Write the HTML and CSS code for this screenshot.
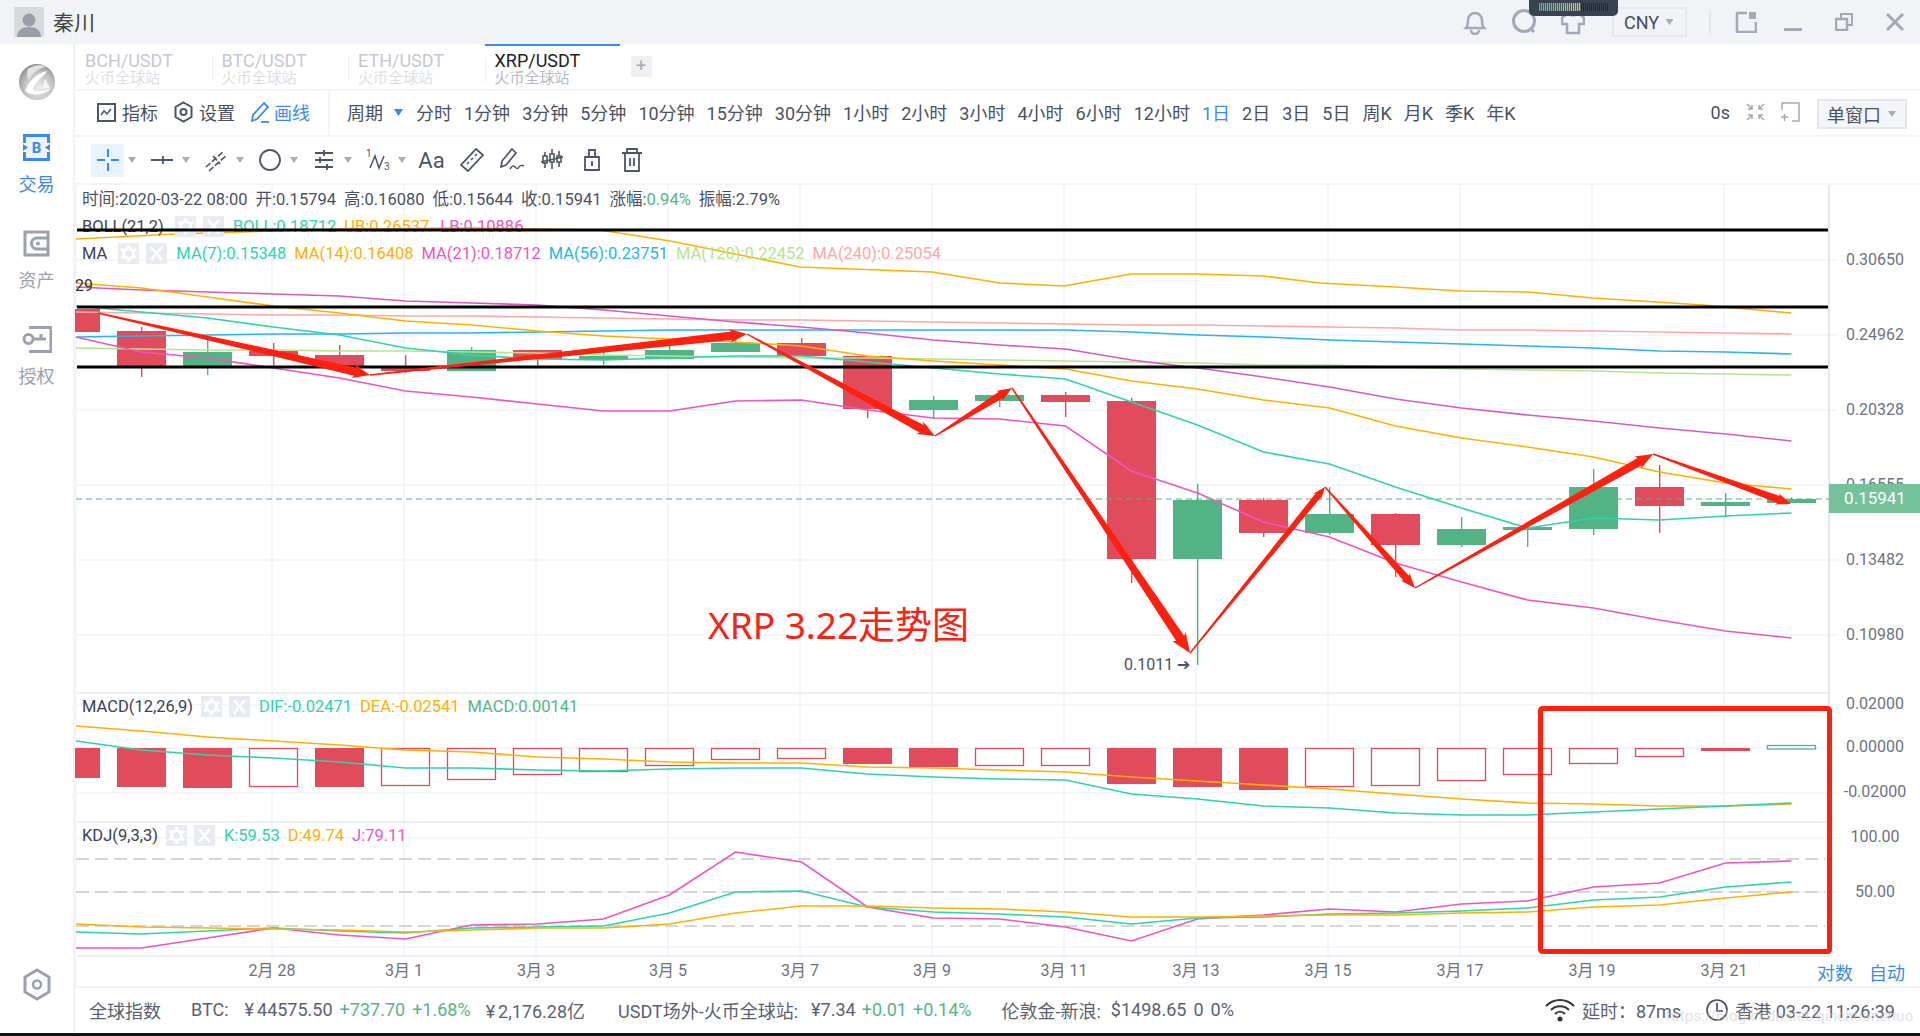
FILE: index.html
```html
<!DOCTYPE html>
<html lang="zh-CN">
<head>
  <meta charset="UTF-8">
  <title>XRP/USDT</title>
  <link rel="stylesheet" href="styles.css">
</head>
<body>
  <!-- shared icons -->
  <svg class="defs">
    <symbol id="i-gear" viewBox="0 0 21 21">
      <rect width="21" height="21" fill="#e8ebef"/>
      <circle cx="10.5" cy="10.5" r="5" fill="none" stroke="#fff" stroke-width="3"/>
      <path d="M10.5 2v4M10.5 15v4M3 6l3.500 2M15 13l3.500 2M3 15l3.500-2M15 8l3.500-2" stroke="#fff" stroke-width="2.500"/>
    </symbol>
    <symbol id="i-close" viewBox="0 0 21 21">
      <rect width="21" height="21" fill="#e8ebef"/>
      <path d="M5 4l11 13M16 4L5 17" stroke="#fff" stroke-width="2.500"/>
    </symbol>
    <symbol id="i-caret" viewBox="0 0 8 6">
      <path d="M0 0h8L4 6z" fill="#a8aeb8"/>
    </symbol>
  </svg>

  <header class="titlebar">
    <div class="avatar">
      <svg width="30" height="30" viewBox="0 0 30 30"><circle cx="15" cy="13" r="6.500" fill="#9a9ea6"/><path d="M3 30c0-7 5-10 12-10s12 3 12 10z" fill="#9a9ea6"/></svg>
    </div>
    <span class="username">秦川</span>
    <div class="title-right">
      <svg class="ticon" width="24" height="26" viewBox="0 0 24 26"><path d="M3 19c2-2 2-4 2-8a7 7 0 0 1 14 0c0 4 0 6 2 8z" fill="none" stroke="#a3a9b5" stroke-width="2.500"/><path d="M8 21a4 4 0 0 0 8 0" fill="none" stroke="#a3a9b5" stroke-width="2.500"/></svg>
      <svg class="ticon" width="24" height="26" viewBox="0 0 24 26"><circle cx="12" cy="12" r="10.500" fill="none" stroke="#a3a9b5" stroke-width="3"/><path d="M18 19l4 4" stroke="#a3a9b5" stroke-width="3"/></svg>
      <svg class="ticon" width="24" height="26" viewBox="0 0 24 26"><path d="M7 4L1 9v6h5v9h12v-9h5V9l-6-5c-1 3-9 3-10 0z" fill="none" stroke="#a3a9b5" stroke-width="2.500"/></svg>
      <div class="currency">CNY<svg width="11" height="6"><use href="#i-caret"/></svg></div>
      <span class="title-sep"></span>
      <div class="win-btns">
        <svg class="win-first" width="22" height="22" viewBox="0 0 22 22"><path d="M12 2H2v19h19V11" fill="none" stroke="#a3a9b5" stroke-width="2.500"/><rect x="14" y="1" width="7" height="7" fill="#a3a9b5"/></svg>
        <svg width="18" height="22" viewBox="0 0 18 22"><path d="M0 18.500h18" stroke="#a3a9b5" stroke-width="3"/></svg>
        <svg width="18" height="18" viewBox="0 0 18 18"><path d="M6 5V1h11v11h-5" fill="none" stroke="#a3a9b5" stroke-width="2"/><rect x="1" y="6" width="11" height="11" fill="none" stroke="#a3a9b5" stroke-width="2.500"/></svg>
        <svg width="18" height="18" viewBox="0 0 18 18"><path d="M1 1l16 16M17 1L1 17" stroke="#a3a9b5" stroke-width="3"/></svg>
      </div>
    </div>
    <!-- network meter floating over the title bar -->
    <div class="net-meter"><span class="meter-on"></span><span class="meter-off"></span></div>
  </header>

  <div class="layout">
    <nav class="sidebar">
      <svg class="logo" width="36" height="36" viewBox="0 0 36 36">
        <defs><radialGradient id="silver" cx="55%" cy="65%" r="65%"><stop offset="0" stop-color="#ececec"/><stop offset="0.6" stop-color="#c4c4c4"/><stop offset="1" stop-color="#8f8f8f"/></radialGradient></defs>
        <circle cx="18" cy="18" r="18" fill="url(#silver)"/>
        <path d="M9 5c6-4 13-5 18-2-7 1-14 6-17 13-2-3-3-7-1-11z" fill="#e2e2e2"/>
        <path d="M6 27c3-9 12-18 22-20-1 3-6 6-9 10-3 3-5 6-5 9 5 2 11 1 18-2-6 7-19 9-26 3z" fill="#fff"/>
        <path d="M26 15l5 9-9 1c2-3 3-6 4-10z" fill="#f5f5f5"/>
      </svg>
      <a class="nav-item active">
        <svg width="27" height="27" viewBox="0 0 27 27">
          <rect x="3" y="3" width="21" height="21" fill="#eef5fe"/>
          <path d="M1.500 9V1.500h24V9M25.500 18v7.500h-24V18" fill="none" stroke="#3a8bf0" stroke-width="3"/>
          <path d="M0 10l5 3.500-5 3.500zM27 10l-5 3.500 5 3.500z" fill="#3a8bf0"/>
          <text x="13.500" y="19" class="nav-b">B</text>
        </svg>
        <span>交易</span>
      </a>
      <a class="nav-item">
        <svg width="27" height="27" viewBox="0 0 27 27">
          <path d="M25 7V2H2v23h23v-5" fill="none" stroke="#9ba2ae" stroke-width="3"/>
          <path d="M25 8H14a5.500 5.500 0 0 0 0 11h11z" fill="none" stroke="#9ba2ae" stroke-width="3"/>
          <circle cx="15" cy="13.500" r="2" fill="#9ba2ae"/>
        </svg>
        <span>资产</span>
      </a>
      <a class="nav-item">
        <svg width="30" height="27" viewBox="0 0 30 27">
          <path d="M7 1.500h22v24H7" fill="none" stroke="#9ba2ae" stroke-width="3"/>
          <rect x="0" y="5" width="6" height="14" fill="#fff"/>
          <circle cx="6.500" cy="13" r="4.500" fill="#fff" stroke="#9ba2ae" stroke-width="3"/>
          <path d="M11 13h13M19 13v-5" stroke="#9ba2ae" stroke-width="3"/>
        </svg>
        <span>授权</span>
      </a>
      <svg class="nav-bottom" width="28" height="33" viewBox="0 0 28 33">
        <path d="M14 2l12 7v15l-12 7-12-7V9z" fill="none" stroke="#9ba2ae" stroke-width="3"/>
        <circle cx="14" cy="16.500" r="4" fill="none" stroke="#9ba2ae" stroke-width="2.500"/>
      </svg>
    </nav>

    <main class="content">
      <div class="tabs">
        <div class="tab"><b>BCH/USDT</b><small>火币全球站</small></div>
        <div class="tab"><b>BTC/USDT</b><small>火币全球站</small></div>
        <div class="tab"><b>ETH/USDT</b><small>火币全球站</small></div>
        <div class="tab active"><b>XRP/USDT</b><small>火币全球站</small></div>
        <div class="tab-add">+</div>
      </div>

      <div class="toolbar">
        <div class="tool-left">
          <div class="tb-item">
            <svg width="19" height="19" viewBox="0 0 19 19"><rect x="1" y="1" width="17" height="17" fill="none" stroke="#4d5666" stroke-width="2"/><path d="M4 12l3-4 3 3 4-5" fill="none" stroke="#4d5666" stroke-width="1.500"/></svg>
            <span>指标</span>
          </div>
          <div class="tb-item">
            <svg width="19" height="22" viewBox="0 0 19 22"><path d="M9.500 1.500l8 4.500v10l-8 4.500-8-4.500V6z" fill="none" stroke="#4d5666" stroke-width="2"/><circle cx="9.500" cy="11" r="3" fill="none" stroke="#4d5666" stroke-width="2"/></svg>
            <span>设置</span>
          </div>
          <div class="tb-item blue">
            <svg width="19" height="22" viewBox="0 0 19 22"><path d="M13 2l4 4L6 18l-5 2 1-6z" fill="none" stroke="#3a8bf0" stroke-width="1.800"/><path d="M10 21h8" stroke="#3a8bf0" stroke-width="1.800"/></svg>
            <span>画线</span>
          </div>
        </div>
        <div class="periods">
          <div class="period-label">周期<svg width="11" height="7" viewBox="0 0 8 6"><path d="M0 0h8L4 6z" fill="#3a8bf0"/></svg></div>
          <span>分时</span><span>1分钟</span><span>3分钟</span><span>5分钟</span><span>10分钟</span><span>15分钟</span><span>30分钟</span>
          <span>1小时</span><span>2小时</span><span>3小时</span><span>4小时</span><span>6小时</span><span>12小时</span>
          <span class="blue">1日</span><span>2日</span><span>3日</span><span>5日</span><span>周K</span><span>月K</span><span>季K</span><span>年K</span>
        </div>
        <div class="tool-right">
          <span>0s</span>
          <svg width="19" height="20" viewBox="0 0 19 20"><path d="M1 2l5 5M6 3v4H2M18 2l-5 5M13 3v4h4M1 18l5-5M6 17v-4H2M18 18l-5-5M13 17v-4h4" fill="none" stroke="#a3a9b5" stroke-width="1.500"/></svg>
          <svg width="19" height="20" viewBox="0 0 19 20"><path d="M1 8V1h17v18h-7" fill="none" stroke="#a3a9b5" stroke-width="1.500"/><path d="M0 15h7M3.500 12v7" stroke="#a3a9b5" stroke-width="1.500"/></svg>
          <div class="window-select">单窗口<svg width="10" height="6"><use href="#i-caret"/></svg></div>
        </div>
      </div>

      <div class="drawbar">
        <div class="draw-tool">
          <span class="draw-icon selected"><svg width="24" height="24" viewBox="0 0 24 24"><path d="M12 1v8M12 15v8M1 12h8M15 12h8" stroke="#3a8bf0" stroke-width="2"/></svg></span>
          <svg class="caret" width="8" height="6"><use href="#i-caret"/></svg>
        </div>
        <div class="draw-tool">
          <span class="draw-icon"><svg width="24" height="24" viewBox="0 0 24 24"><path d="M1 12h22M13 8v8" stroke="#4d5666" stroke-width="1.800"/></svg></span>
          <svg class="caret" width="8" height="6"><use href="#i-caret"/></svg>
        </div>
        <div class="draw-tool">
          <span class="draw-icon"><svg width="24" height="24" viewBox="0 0 24 24"><path d="M2 19L20 3M5 23L23 7M9 8l7 8" fill="none" stroke="#4d5666" stroke-width="1.600" stroke-dasharray="6 2"/></svg></span>
          <svg class="caret" width="8" height="6"><use href="#i-caret"/></svg>
        </div>
        <div class="draw-tool">
          <span class="draw-icon"><svg width="24" height="24" viewBox="0 0 24 24"><circle cx="12" cy="12" r="10" fill="none" stroke="#4d5666" stroke-width="1.800"/></svg></span>
          <svg class="caret" width="8" height="6"><use href="#i-caret"/></svg>
        </div>
        <div class="draw-tool">
          <span class="draw-icon"><svg width="24" height="24" viewBox="0 0 24 24"><path d="M3 5h18M3 12h18M3 19h18M12 2v6M8 9v6M15 16v6" stroke="#4d5666" stroke-width="1.800"/></svg></span>
          <svg class="caret" width="8" height="6"><use href="#i-caret"/></svg>
        </div>
        <div class="draw-tool">
          <span class="draw-icon"><svg width="26" height="24" viewBox="0 0 26 24"><path d="M5 20L10 8l4 12 5-12" fill="none" stroke="#4d5666" stroke-width="1.500"/><text x="1" y="9" class="wave-num">1</text><text x="19" y="22" class="wave-num">3</text></svg></span>
          <svg class="caret" width="8" height="6"><use href="#i-caret"/></svg>
        </div>
        <span class="draw-icon text-tool">Aa</span>
        <span class="draw-icon"><svg width="24" height="24" viewBox="0 0 24 24"><path d="M16 1l7 6L8 23l-7-6z" fill="none" stroke="#4d5666" stroke-width="1.800"/><path d="M7 16l2-2M11 12l2-2M15 8l2-2" stroke="#4d5666" stroke-width="1.600"/></svg></span>
        <span class="draw-icon"><svg width="26" height="24" viewBox="0 0 26 24"><path d="M13 1l4 4L7 17l-5 2 1-6z" fill="none" stroke="#4d5666" stroke-width="1.700"/><path d="M11 21c2-3 3-4 5-2s3 2 4 0 3-2 5-1" fill="none" stroke="#4d5666" stroke-width="1.500"/></svg></span>
        <span class="draw-icon"><svg width="24" height="24" viewBox="0 0 24 24"><path d="M5 4v16M12 1v20M19 3v16" stroke="#4d5666" stroke-width="1.600"/><path d="M3 8h4v7H3zM10 6h4v8h-4zM17 8h4v6h-4z" fill="#fff" stroke="#4d5666" stroke-width="1.600"/><path d="M1 14l22-5" stroke="#4d5666" stroke-width="1.600"/></svg></span>
        <span class="draw-icon"><svg width="18" height="24" viewBox="0 0 18 24"><path d="M2 9h14v13H2zM6 9V2h6v7" fill="none" stroke="#4d5666" stroke-width="1.800"/><path d="M9 13v5" stroke="#4d5666" stroke-width="1.800"/></svg></span>
        <span class="draw-icon"><svg width="20" height="24" viewBox="0 0 20 24"><path d="M0 5h20M5 5V1h10v4M3 5v18h14V5M8 10v8M12 10v8" fill="none" stroke="#4d5666" stroke-width="1.800"/></svg></span>
      </div>

      <section class="chart">
        <svg id="chart" width="1845" height="803" viewBox="75 185 1845 803"></svg>

        <div class="legend row-info">
          <span>时间:2020-03-22 08:00</span><span>开:0.15794</span><span>高:0.16080</span><span>低:0.15644</span><span>收:0.15941</span>
          <span>涨幅:<em class="c-green">0.94%</em></span><span>振幅:2.79%</span>
        </div>
        <div class="legend row-boll">
          <span class="name">BOLL(21,2)</span>
          <svg class="mini"><use href="#i-gear"/></svg><svg class="mini"><use href="#i-close"/></svg>
          <span class="c-teal">BOLL:0.18712</span><span class="c-orange">UB:0.26537</span><span class="c-magenta">LB:0.10886</span>
        </div>
        <div class="legend row-ma">
          <span class="name">MA</span>
          <svg class="mini"><use href="#i-gear"/></svg><svg class="mini"><use href="#i-close"/></svg>
          <span class="c-teal">MA(7):0.15348</span><span class="c-orange">MA(14):0.16408</span><span class="c-magenta">MA(21):0.18712</span>
          <span class="c-blue">MA(56):0.23751</span><span class="c-lime">MA(120):0.22452</span><span class="c-pink">MA(240):0.25054</span>
        </div>
        <div class="legend row-macd">
          <span class="name">MACD(12,26,9)</span>
          <svg class="mini"><use href="#i-gear"/></svg><svg class="mini"><use href="#i-close"/></svg>
          <span class="c-teal">DIF:-0.02471</span><span class="c-orange">DEA:-0.02541</span><span class="c-green">MACD:0.00141</span>
        </div>
        <div class="legend row-kdj">
          <span class="name">KDJ(9,3,3)</span>
          <svg class="mini"><use href="#i-gear"/></svg><svg class="mini"><use href="#i-close"/></svg>
          <span class="c-teal">K:59.53</span><span class="c-orange">D:49.74</span><span class="c-magenta">J:79.11</span>
        </div>

        <div class="scale-btns"><span>对数</span><span>自动</span></div>

        <!-- hand drawn marks on top of the chart -->
        <svg id="marks" width="1845" height="803" viewBox="75 185 1845 803"></svg>
      </section>

      <footer class="status">
        <span class="st-title">全球指数</span>
        <div class="st-group">
          <span class="st-name">BTC:</span><span><i class="yen">¥</i>44575.50</span><span class="c-green">+737.70</span><span class="c-green">+1.68%</span><span class="st-extra"><i class="yen">¥</i>2,176.28亿</span>
        </div>
        <div class="st-group st-usdt">
          <span class="st-name">USDT场外-火币全球站:</span><span>¥7.34</span><span class="c-green">+0.01</span><span class="c-green">+0.14%</span>
        </div>
        <div class="st-group st-gold">
          <span class="st-name">伦敦金-新浪:</span><span>$1498.65</span><span>0</span><span>0%</span>
        </div>
        <div class="st-right">
          <svg width="30" height="24" viewBox="0 0 30 24"><path d="M1 8c8-8 20-8 28 0M6 12c5-5 13-5 18 0M10 16c3-3 7-3 10 0" fill="none" stroke="#333" stroke-width="2"/><circle cx="15" cy="21" r="2.500" fill="#333"/></svg>
          <span class="delay">延时：87ms</span>
          <svg width="22" height="22" viewBox="0 0 22 22"><circle cx="11" cy="11" r="10" fill="none" stroke="#444c5c" stroke-width="1.600"/><path d="M11 4v8h6" fill="none" stroke="#444c5c" stroke-width="1.600"/></svg>
          <span>香港 03-22 11:26:39</span>
        </div>
        <span class="watermark">https://blog.csdn.net/qinchuanshuo</span>
      </footer>
    </main>
  </div>
  <div class="taskbar"></div>

  <script src="chart.js"></script>
</body>
</html>
```

FILE: styles.css
```css
* {
  box-sizing: border-box;
}

html, body {
  margin: 0;
  height: 100%;
  overflow: hidden;
}

body {
  display: flex;
  flex-direction: column;
  width: 1920px;
  height: 1036px;
  font-family: Roboto, "Noto Sans CJK SC", sans-serif;
  font-size: 18px;
  color: #4a5261;
  background: #fff;
}

em, i {
  font-style: normal;
}

.defs {
  width: 0;
  height: 0;
  position: absolute;
}

.blue { color: #3a8bf0; }
.c-green { color: #52b788; }
.c-teal { color: #2dd4ae; }
.c-orange { color: #ffb000; }
.c-magenta { color: #ee55c3; }
.c-blue { color: #2ab4e8; }
.c-lime { color: #b5e58f; }
.c-pink { color: #ffa6a6; }

/* title bar */
.titlebar {
  position: relative;
  display: flex;
  align-items: center;
  height: 44px;
  padding: 0 16px 0 14px;
  background: #f1f3f7;
}

.avatar {
  width: 30px;
  height: 30px;
  overflow: hidden;
  background: #d8dade;
}

.avatar svg {
  display: block;
}

.username {
  margin: 0 0 2px 9px;
  font-size: 21px;
  color: #444;
}

.title-right {
  display: flex;
  align-items: center;
  margin-left: auto;
}

.ticon {
  margin-right: 25px;
}

.currency {
  display: flex;
  align-items: center;
  justify-content: space-between;
  width: 75px;
  height: 30px;
  margin-left: 2px;
  padding: 0 10px;
  border: 2px solid #e6e8ee;
  color: #444c5c;
}

.title-sep {
  width: 2px;
  height: 24px;
  margin: 0 24px 0 22px;
  background: #e4e6ea;
}

.win-btns {
  display: flex;
  align-items: center;
  gap: 33px;
}

.win-first {
  margin-right: -6px;
}

.net-meter {
  position: absolute;
  left: 1529px;
  top: 0;
  display: flex;
  width: 89px;
  height: 16px;
  padding: 3px 10px 5px;
  border-radius: 0 0 5px 5px;
  background: #3a4252;
}

.meter-on {
  width: 42px;
  background: repeating-linear-gradient(90deg, transparent 0 1px, rgba(58, 66, 82, .8) 1px 2px), linear-gradient(90deg, #3fc0a8, #86c96e 60%, #e4c84a);
}

.meter-off {
  flex: 1;
  background: repeating-linear-gradient(90deg, #232a36 0 1px, #3a4252 1px 2px);
}

/* page body */
.layout {
  display: flex;
  flex: 1;
  min-height: 0;
}

.sidebar {
  display: flex;
  flex-direction: column;
  align-items: center;
  flex: none;
  width: 75px;
  padding: 20px 0 32px;
  border-right: 2px solid #f0f2f5;
}

.logo {
  margin-bottom: 34px;
}

.nav-item {
  display: flex;
  flex-direction: column;
  align-items: center;
  gap: 14px;
  height: 96px;
  color: #9ba2ae;
  line-height: 20px;
}

.nav-item.active {
  color: #3a8bf0;
}

.nav-b {
  font: 700 15px Roboto, sans-serif;
  fill: #3a8bf0;
  text-anchor: middle;
}

.nav-bottom {
  margin-top: auto;
}

.content {
  display: flex;
  flex-direction: column;
  flex: 1;
  min-width: 0;
}

/* tabs */
.tabs {
  display: flex;
  align-items: flex-start;
  flex: none;
  height: 47px;
  border-bottom: 2px solid #f3f4f8;
}

.tab {
  position: relative;
  display: flex;
  flex-direction: column;
  width: 136.500px;
  height: 45px;
  padding: 8px 0 0 10px;
  color: #c5c9d1;
}

.tab b {
  font-size: 18px;
  font-weight: 400;
  line-height: 18px;
}

.tab small {
  font-size: 15px;
  line-height: 16px;
  color: #dcdfe4;
}

.tab + .tab::before {
  content: "";
  position: absolute;
  left: 0;
  top: 12px;
  width: 1px;
  height: 24px;
  background: #eceef1;
}

.tab.active {
  width: 135px;
  border-top: 2px solid #3a8bf0;
  padding-top: 6px;
  color: #222;
}

.tab.active small {
  color: #b5bac4;
}

.tab-add {
  width: 21px;
  height: 21px;
  margin: 12px 0 0 11px;
  background: #eef0f3;
  color: #a3a9b5;
  font-size: 18px;
  line-height: 20px;
  text-align: center;
}

/* period toolbar */
.toolbar {
  display: flex;
  align-items: center;
  flex: none;
  height: 46px;
  padding-bottom: 2px;
  border-bottom: 2px solid #f3f4f8;
}

.tool-left {
  display: flex;
  align-items: center;
  gap: 16px;
  width: 255px;
  height: 44px;
  margin-bottom: -2px;
  padding: 0 0 2px 22px;
  border-right: 2px solid #f3f4f8;
}

.tb-item {
  display: flex;
  align-items: center;
  gap: 6px;
}

.tb-item.blue {
  gap: 4px;
}

.periods {
  display: flex;
  align-items: center;
  gap: 12px;
  padding-left: 17px;
}

.period-label {
  display: flex;
  align-items: center;
  gap: 10px;
}

.tool-right {
  display: flex;
  align-items: center;
  gap: 16px;
  margin-left: auto;
  padding-right: 13px;
}

.window-select {
  display: flex;
  flex: none;
  align-items: center;
  gap: 6px;
  width: 90px;
  height: 30px;
  margin: 2px 0 -2px 1px;
  padding: 0 8px;
  border: 2px solid #e3e6ec;
  background: #f4f5f8;
  white-space: nowrap;
}

/* drawing tools */
.drawbar {
  display: flex;
  align-items: center;
  flex: none;
  height: 48px;
  padding-left: 16px;
  border-bottom: 2px solid #f3f4f8;
}

.draw-tool {
  display: flex;
  align-items: center;
  gap: 4px;
  margin-right: 9px;
}

.draw-icon {
  display: flex;
  align-items: center;
  justify-content: center;
  width: 33px;
  height: 33px;
  margin-right: 7px;
}

.draw-tool .draw-icon {
  margin-right: 0;
}

.draw-icon.selected {
  background: #e8f3fd;
}

.text-tool {
  font-size: 22px;
  color: #4d5666;
}

.wave-num {
  font-size: 10px;
  fill: #4d5666;
}

/* chart */
.chart {
  position: relative;
  flex: none;
  height: 803px;
  border-bottom: 2px solid #f3f4f8;
  margin-left: -2px;
  width: 1847px;
  padding-left: 2px;
}

#chart {
  display: block;
}

#marks {
  position: absolute;
  left: 2px;
  top: 0;
  pointer-events: none;
}

.legend {
  position: absolute;
  display: flex;
  align-items: center;
  left: 9px;
  height: 21px;
  font-size: 16.500px;
  white-space: nowrap;
}

.legend .name {
  color: #3b4250;
}

.mini {
  flex: none;
  width: 21px;
  height: 21px;
  margin-left: 7px;
}

.row-info { top: 2px; gap: 8px; }
.row-boll { top: 31px; }
.row-ma { top: 58px; }
.row-macd { top: 511px; }
.row-kdj { top: 640px; }

.legend .c-teal { margin-left: 9px; }
.legend .c-teal, .legend .c-orange, .legend .c-magenta, .legend .c-blue, .legend .c-lime { margin-right: 8px; }
.name + .mini { margin-left: 8px; }
.row-boll .name + .mini { margin-left: 11px; }
.row-ma .name + .mini { margin-left: 11px; }
.row-boll .c-orange { margin-right: 11px; }

.scale-btns {
  position: absolute;
  right: 15px;
  top: 774px;
  display: flex;
  gap: 16px;
  color: #3a8bf0;
}

.grid { stroke: #f3f6fa; stroke-width: 2; }
.pane-line { stroke: #ebeef2; stroke-width: 2; }
.axis-line { stroke: #e3e6ec; stroke-width: 2; }
.dash-k { stroke: #c9c9c9; stroke-width: 1.500; stroke-dasharray: 13 6; }
.price-line { stroke: #52b788; stroke-width: 1.200; stroke-dasharray: 6 4; }
.series { fill: none; stroke-width: 1.600; }
.axis-text { font-size: 16px; fill: #6d7380; }
.axis-price { text-anchor: middle; }
.axis-date { text-anchor: middle; }
.badge { fill: #74c19b; }
.badge-text { font-size: 17px; fill: #fff; text-anchor: middle; }
.clip-text { font-size: 16px; fill: #333; }
.low-text { font-size: 16px; fill: #4a5261; }
.black-line { stroke: #000; stroke-width: 3; }
.red-box { fill: none; stroke: #ff2010; stroke-width: 5; }
.red-arrow { fill: #ff2010; }
.note {
  font-family: "Noto Sans", "Noto Sans CJK SC", sans-serif;
  font-size: 37px;
  fill: #ff2010;
}

/* status bar */
.status {
  position: relative;
  display: flex;
  align-items: center;
  flex: 1;
  padding: 0 0 2px 14px;
  color: #5a6270;
}

.st-title {
  margin-right: 30px;
}

.st-group {
  display: flex;
  align-items: center;
  gap: 7px;
  margin-right: 33px;
}

.st-name {
  margin-right: 9px;
}

.st-usdt {
  gap: 6px;
  margin-right: 30px;
}

.st-usdt .st-name {
  margin-right: 7px;
}

.st-gold .st-name {
  margin-right: 3px;
}

.yen {
  margin-right: 3px;
}

.st-extra {
  margin-left: 8px;
}

.st-right {
  display: flex;
  align-items: center;
  gap: 7px;
  margin-left: auto;
  padding-right: 25px;
}

.delay {
  margin-right: 18px;
}

.watermark {
  position: absolute;
  left: 1591px;
  top: 19px;
  font-size: 15.500px;
  color: rgba(200, 200, 200, .55);
  white-space: nowrap;
}

.taskbar {
  flex: none;
  height: 3px;
  background: #111;
}
```

FILE: chart.js
```js
// all y values are page pixels, candles are spaced 66px apart
const chart = document.getElementById('chart');
const marks = document.getElementById('marks');

const RED = '#e24b5b';
const GREEN = '#52b385';
const candleX = i => 75.5 + 66 * i;

// [color, body top, body bottom, wick top, wick bottom]
const candles = [
  ['r', 309, 332, 309, 332], ['r', 331, 367, 327, 377], ['g', 352, 367, 338, 375], ['r', 351, 356, 343, 367],
  ['r', 355, 367, 345, 367], ['r', 366, 371, 355, 373], ['g', 350, 371, 347, 371], ['r', 350, 359, 350, 366],
  ['g', 356, 360, 352, 365], ['g', 350, 359, 345, 359], ['g', 343, 352, 339, 352], ['r', 343, 356, 338, 356],
  ['r', 356, 409, 356, 418], ['g', 400, 410, 396, 419], ['g', 395, 401, 395, 407], ['r', 395, 402, 392, 417],
  ['r', 401, 559, 398, 583], ['g', 500, 559, 484, 665], ['r', 500, 533, 498, 537], ['g', 514, 533, 487, 535],
  ['r', 514, 545, 513, 577], ['g', 529, 545, 517, 547], ['g', 527, 530, 527, 547], ['g', 487, 529, 469, 535],
  ['r', 487, 506, 465, 533], ['g', 502, 506, 493, 517], ['g', 499, 503, 497, 503]
];

// [bar end, filled]
const macdBars = [
  [778, 1], [787, 1], [788, 1], [786, 0], [787, 1], [785, 0], [779, 0], [774, 0], [771, 0], [765, 0],
  [759, 0], [758, 0], [764, 1], [767, 1], [765, 0], [765, 0], [784, 1], [787, 1], [790, 1], [786, 0],
  [785, 0], [780, 0], [774, 0], [763, 0], [756, 0], [751, 1]
];

const mainLines = [
  { color: '#ffb000', pts: '76,239 175,234 335,229 470,228 600,230 670,241 700,247 800,267 932,272 1000,283 1064,286 1131,274 1197,274 1263,276 1320,283 1395,287 1461,291 1528,292 1593,298 1703,305 1791,313' },
  { color: '#ffa6a6', y: [312, 313, 314, 315, 315, 316, 316, 317, 318, 319, 320, 320, 321, 322, 323, 324, 325, 325, 326, 327, 328, 330, 330, 331, 332, 333, 334] },
  { color: '#2ab4e8', y: [337, 336, 335, 334, 334, 333, 333, 332, 331, 330, 330, 330, 330, 330, 330, 330, 332, 335, 337, 340, 342, 344, 346, 348, 351, 352, 354] },
  { color: '#b5e58f', y: [348, 349, 350, 350, 351, 351, 352, 353, 355, 356, 357, 358, 358, 359, 360, 361, 362, 363, 365, 365, 367, 369, 370, 371, 373, 374, 375] },
  { color: '#d85ac2', y: [287, 290, 292, 294, 296, 301, 303, 305, 310, 316, 322, 327, 333, 340, 345, 349, 360, 368, 377, 387, 399, 408, 415, 421, 428, 434, 441] },
  { color: '#ffb000', y: [283, 288, 297, 306, 313, 321, 325, 331, 336, 339, 342, 346, 356, 361, 365, 369, 381, 389, 400, 408, 426, 438, 447, 457, 472, 483, 489] },
  { color: '#2dd4ae', y: [306, 312, 318, 327, 335, 348, 355, 359, 360, 358, 356, 356, 362, 368, 374, 379, 402, 425, 452, 464, 487, 508, 528, 518, 520, 516, 513] },
  { color: '#ee55c3', y: [337, 352, 358, 368, 378, 391, 397, 404, 411, 411, 401, 400, 410, 418, 419, 426, 471, 493, 522, 537, 563, 582, 600, 608, 620, 631, 638] }
];

const macdLines = [
  { color: '#ffb000', y: [726, 731, 737, 741, 745, 750, 752, 757, 759, 762, 763, 763, 767, 768, 770, 772, 777, 781, 785, 789, 794, 799, 803, 804, 806, 806, 804] },
  { color: '#2dd4ae', y: [741, 750, 755, 758, 762, 768, 768, 770, 771, 769, 768, 768, 774, 777, 779, 780, 794, 799, 806, 808, 813, 815, 815, 812, 809, 806, 803] }
];

const kdjLines = [
  { color: '#ee55c3', y: [948, 948, 938, 928, 935, 939, 925, 924, 919, 895, 852, 862, 907, 918, 919, 927, 941, 919, 915, 909, 912, 904, 901, 887, 883, 863, 861] },
  { color: '#2dd4ae', y: [932, 934, 931, 928, 931, 933, 928, 927, 926, 913, 892, 891, 907, 912, 914, 917, 924, 918, 917, 914, 913, 911, 908, 900, 897, 887, 882] },
  { color: '#ffb000', y: [924, 927, 928, 929, 930, 932, 930, 928, 928, 924, 913, 906, 906, 908, 909, 912, 917, 917, 916, 915, 915, 913, 912, 907, 905, 898, 892] }
];

function line(x1, y1, x2, y2, cls) {
  return `<line x1="${x1}" y1="${y1}" x2="${x2}" y2="${y2}" class="${cls}"/>`;
}

function polyline(s) {
  const pts = s.pts || s.y.map((y, i) => `${Math.max(candleX(i), 76)},${y}`).join(' ');
  return `<polyline points="${pts}" stroke="${s.color}" class="series"/>`;
}

function text(x, y, str, cls) {
  return `<text x="${x}" y="${y}" class="${cls}">${str}</text>`;
}

function drawChart() {
  let html = '';

  // grid
  for (let x = 272; x <= 1724; x += 132) html += line(x, 185, x, 958, 'grid');
  [260, 335, 410, 485, 560, 635].forEach(y => { html += line(75, y, 1838, y, 'grid'); });
  [705, 748, 793, 838, 892, 947].forEach(y => { html += line(75, y, 1838, y, 'grid'); });
  [693, 822, 956].forEach(y => { html += line(75, y, 1829, y, 'pane-line'); });
  html += line(1829, 185, 1829, 956, 'axis-line');
  html += line(76, 185, 76, 988, 'grid');

  // candles
  candles.forEach((c, i) => {
    const color = c[0] === 'r' ? RED : GREEN;
    const x = candleX(i);
    html += `<rect x="${x - 0.5}" y="${c[3]}" width="1.4" height="${c[4] - c[3]}" fill="${color}"/>`;
    html += `<rect x="${x - 24.5}" y="${c[1]}" width="49" height="${c[2] - c[1]}" fill="${color}"/>`;
  });
  mainLines.forEach(s => { html += polyline(s); });
  html += line(76, 499, 1829, 499, 'price-line');

  // macd
  macdBars.forEach((b, i) => {
    const x = candleX(i) - 24.5;
    const h = b[0] - 748;
    if (b[1]) html += `<rect x="${x}" y="748" width="49" height="${h}" fill="${RED}"/>`;
    else html += `<rect x="${x + 0.5}" y="748.500" width="48" height="${h}" fill="#fff" stroke="${RED}" stroke-width="1.300"/>`;
  });
  html += `<rect x="${candleX(26) - 24}" y="745.500" width="48" height="3.500" fill="#fff" stroke="${GREEN}" stroke-width="1.300"/>`;
  macdLines.forEach(s => { html += polyline(s); });

  // kdj
  [859, 892, 926].forEach(y => { html += line(76, y, 1825, y, 'dash-k'); });
  kdjLines.forEach(s => { html += polyline(s); });

  // axis texts
  [['0.30650', 259], ['0.24962', 334], ['0.20328', 409], ['0.16555', 484], ['0.13482', 559], ['0.10980', 634],
    ['0.02000', 703], ['0.00000', 746], ['-0.02000', 791], ['100.00', 836], ['50.00', 891]].forEach(a => {
    html += text(1875, a[1] + 6, a[0], 'axis-text axis-price');
  });
  ['2月 28', '3月 1', '3月 3', '3月 5', '3月 7', '3月 9', '3月 11', '3月 13', '3月 15', '3月 17', '3月 19', '3月 21'].forEach((d, i) => {
    html += text(272 + 132 * i, 976, d, 'axis-text axis-date');
  });

  // last price badge
  html += `<rect x="1829" y="484" width="91" height="29" class="badge"/>`;
  html += text(1875, 504, '0.15941', 'badge-text');

  html += text(75, 291, '29', 'clip-text');
  html += text(1124, 670, '0.1011 ➔', 'low-text');

  chart.innerHTML = html;
}

// tapered arrow: thin at the start, widest just behind the head
function arrow(x1, y1, x2, y2, w) {
  const len = Math.hypot(x2 - x1, y2 - y1);
  const ux = (x2 - x1) / len;
  const uy = (y2 - y1) / len;
  const at = (along, off) => `${(x1 + ux * along - uy * off).toFixed(1)},${(y1 + uy * along + ux * off).toFixed(1)}`;
  const head = w * 2.2;
  const pts = [
    at(0, 0.7), at(len - head, (w + 1.5) / 2), at(len - head - 2, w), at(len, 0),
    at(len - head - 2, -w), at(len - head, -(w + 1.5) / 2), at(0, -0.7)
  ];
  return `<polygon points="${pts.join(' ')}" class="red-arrow"/>`;
}

function drawMarks() {
  let html = '';
  [230, 307, 367].forEach(y => { html += line(77, y, 1828, y, 'black-line'); });
  html += arrow(98, 313, 370, 375, 7);
  html += arrow(370, 375, 747, 334, 7);
  html += arrow(747, 334, 935, 436, 7);
  html += arrow(935, 436, 1012, 388, 6);
  html += arrow(1012, 388, 1190, 653, 8);
  html += arrow(1190, 653, 1325, 487, 5);
  html += arrow(1325, 487, 1415, 588, 6);
  html += arrow(1415, 588, 1653, 454, 7);
  html += arrow(1653, 454, 1791, 504, 6);
  html += `<rect x="1540.500" y="708.500" width="289" height="243" rx="2" class="red-box"/>`;
  html += text(708, 639, 'XRP 3.22走势图', 'note');
  marks.innerHTML = html;
}

drawChart();
drawMarks();
```
